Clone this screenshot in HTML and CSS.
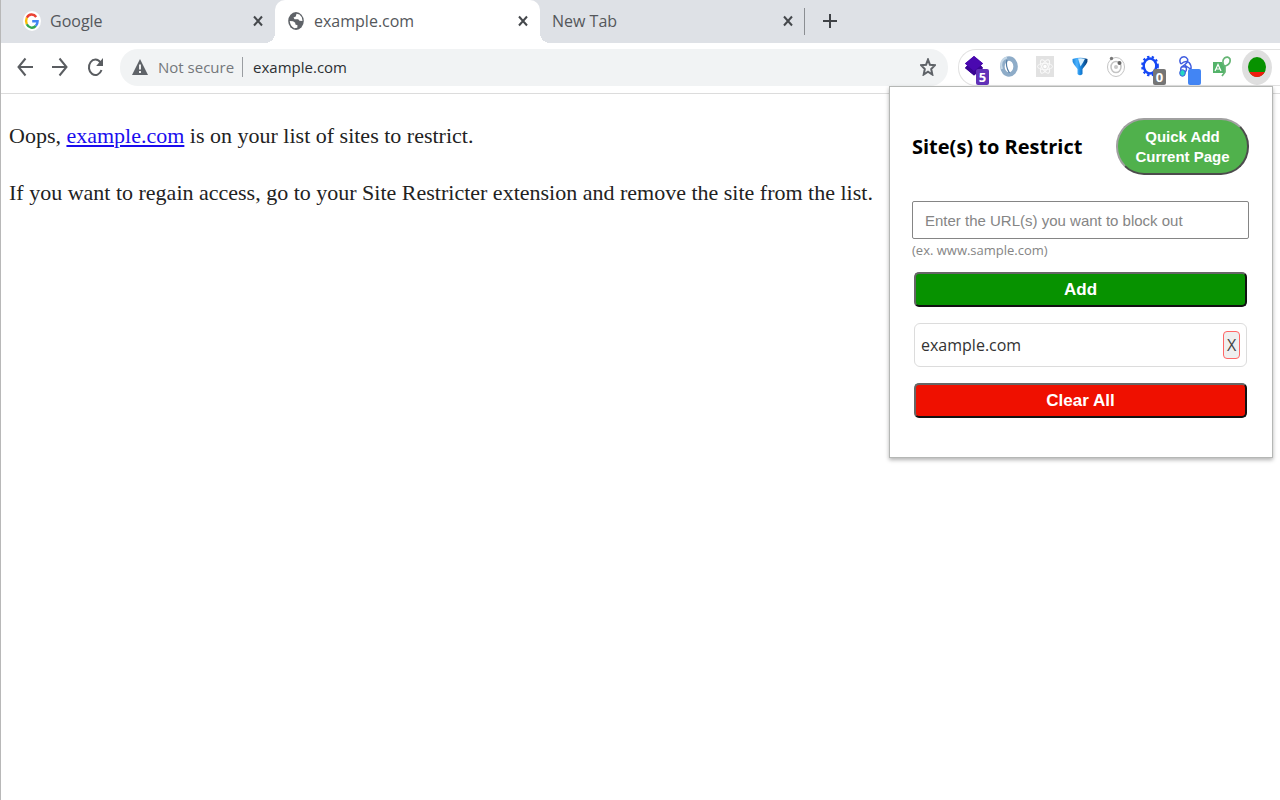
FILE: index.html
```html
<!DOCTYPE html>
<html lang="en">
<head>
<meta charset="utf-8">
<title>example.com</title>
<link rel="stylesheet" href="styles.css">
</head>
<body>
<div class="browser">
  <header class="chrome">
    <div class="tabs">
      <div class="tab tab-first">
        <svg class="favicon" viewBox="0 0 18 20" aria-hidden="true"><ellipse cx="9" cy="10" rx="9" ry="10" fill="#fff"/><g fill="none" stroke-width="2.400"><path d="M13.200 6A5.800 6.800 0 0 0 3.800 6.700" stroke="#ea4335"/><path d="M3.800 6.700A6 7 0 0 0 3.800 13.300" stroke="#fbbc05"/><path d="M3.800 13.300A5.800 6.800 0 0 0 12.800 14.900" stroke="#34a853"/><path d="M12.800 14.900Q14.600 13 14.600 10.200H9.200" stroke="#4285f4"/></g></svg>
        <span class="tab-title">Google</span>
        <button class="close" aria-label="Close Google"><svg viewBox="0 0 10 12"><path d="M1 1.500L9 10.500M9 1.500L1 10.500"/></svg></button>
      </div>
      <div class="tab tab-active">
        <svg class="favicon" viewBox="0 0 18 20" aria-hidden="true"><ellipse cx="9" cy="10" rx="7.800" ry="9" fill="#5f6368"/><path d="M9.500 2.800L12.500 3.500 14.800 6.200 15.500 10 12.500 9.800 11.200 8.300 7.500 8.200 6.500 6.500 8.800 5.500Z" fill="#fff"/><path d="M2.700 10L6 10.200 8.200 11.800 8.400 13.600 10.500 14.200 10.300 16.800 7.300 17.200Q3.500 15.500 2.700 10Z" fill="#fff"/></svg>
        <span class="tab-title">example.com</span>
        <button class="close" aria-label="Close example.com"><svg viewBox="0 0 10 12"><path d="M1 1.500L9 10.500M9 1.500L1 10.500"/></svg></button>
      </div>
      <div class="tab tab-last">
        <span class="tab-title">New Tab</span>
        <button class="close" aria-label="Close New Tab"><svg viewBox="0 0 10 12"><path d="M1 1.500L9 10.500M9 1.500L1 10.500"/></svg></button>
      </div>
      <button class="new-tab" aria-label="New tab"><svg viewBox="0 0 14 16"><path d="M7 1V15M0 8H14"/></svg></button>
    </div>
    <div class="toolbar">
      <nav class="nav">
        <button aria-label="Back"><svg viewBox="0 0 16 20"><path d="M16 10H1.500M8.500 1.500L1.500 10 8.500 18.500"/></svg></button>
        <button aria-label="Forward"><svg viewBox="0 0 16 20"><path d="M0 10H14.500M7.500 1.500L14.500 10 7.500 18.500"/></svg></button>
        <button aria-label="Reload"><svg viewBox="0 0 16 20"><path d="M13.500 5.500A6.500 7.700 0 1 0 14.500 13"/><path class="solid" d="M16 1V9H9.200Z"/></svg></button>
      </nav>
      <div class="address">
        <svg class="warning" viewBox="0 0 16 18" aria-hidden="true"><path d="M8 1L16 17H0Z" fill="#5f6368"/><path d="M8 6.500V11.500M8 13V15" stroke="#fff" stroke-width="1.800"/></svg>
        <span class="security">Not secure</span>
        <input class="url" type="text" aria-label="Address" value="example.com">
        <button class="star" aria-label="Bookmark this page"><svg viewBox="0 0 16 18"><path d="M8 1.500L9.900 6.700 15 7.200 11.200 11 12.300 16.500 8 13.600 3.700 16.500 4.800 11 1 7.200 6.100 6.700Z"/></svg></button>
      </div>
      <div class="extensions">
        <button class="ext" aria-label="Layers"><svg viewBox="0 0 20 24"><path d="M10 1L19 8.500 16.800 10.500 19 13 10 20.500 1 13 3.200 10.500 1 8.500Z" fill="#4007a2"/><path d="M3.200 10.500L1 13 10 20.500 19 13 16.800 10.500 10 16Z" fill="#3a0593"/><path d="M10 1L19 8.500 10 16 1 8.500Z" fill="#4a08b0"/></svg><span class="badge badge-purple">5</span></button>
        <button class="ext" aria-label="Ring"><svg viewBox="0 0 20 24"><ellipse cx="10" cy="11.500" rx="6.600" ry="8" fill="none" stroke="#8eacc8" stroke-width="4.500"/><path d="M3 14Q0 5 8 2.500" fill="none" stroke="#c4d7e6" stroke-width="2"/><path d="M8 5Q6 11 10.500 18" fill="none" stroke="#537da5" stroke-width="1.200"/></svg></button>
        <button class="ext" aria-label="React tools"><svg viewBox="0 0 20 24"><path d="M1 1H19V22H1Z" fill="#e2e2e2"/><g fill="none" stroke="#fafafa"><ellipse cx="10" cy="11.500" rx="7.500" ry="3.200"/><ellipse cx="10" cy="11.500" rx="7.500" ry="3.200" transform="rotate(60 10 11.500)"/><ellipse cx="10" cy="11.500" rx="7.500" ry="3.200" transform="rotate(120 10 11.500)"/></g><circle cx="10" cy="11.500" r="1.700" fill="#fff"/></svg></button>
        <button class="ext" aria-label="Pin"><svg viewBox="0 0 20 24"><defs><linearGradient id="pin" x2="1"><stop stop-color="#1b83d8"/><stop offset=".3" stop-color="#4db3ff"/><stop offset=".55" stop-color="#1683dd"/><stop offset="1" stop-color="#063a73"/></linearGradient></defs><path d="M2.500 4Q10 1.500 17.500 4 18 7 16 9.500L12.500 14V19Q10 21.500 7.500 19V14L4 9.500Q2 7 2.500 4Z" fill="url(#pin)"/><path d="M8 3.500Q11.500 2.800 15 3.800L13 7.500 10.500 11.500Z" fill="#d7f0ff"/></svg></button>
        <button class="ext" aria-label="Orbit"><svg viewBox="0 0 20 24"><g fill="none" stroke="#c4c4c4"><ellipse cx="10" cy="12" rx="8.500" ry="9.500"/><ellipse cx="10" cy="12" rx="5" ry="5.500" stroke-width="1.500"/></g><circle cx="10" cy="12" r="2" fill="#c8c8c8"/><circle cx="5.500" cy="3.500" r="1.700" fill="#777"/><circle cx="13.500" cy="8" r="2" fill="#666"/></svg></button>
        <button class="ext" aria-label="Gear"><svg viewBox="0 0 20 24"><ellipse cx="9" cy="11" rx="6.300" ry="7.500" fill="none" stroke="#1648f5" stroke-width="2.500"/><ellipse cx="9" cy="11" rx="7.800" ry="9.300" fill="none" stroke="#1648f5" stroke-width="2.200" stroke-dasharray="2.300 2.350"/></svg><span class="badge badge-gray">0</span></button>
        <button class="ext" aria-label="Hook"><svg viewBox="0 0 20 24"><g fill="none" stroke="#3f5ce0" stroke-width="1.500"><path d="M5 9Q2.500 5 5.500 2.500 9.500 .5 11.500 4 12.500 7 9 9.500L5.500 12Q4 14 5.500 17"/><path d="M5 9Q9.500 5 13 7.500 15.500 10 15 14M8.500 10L14.500 14M6 12Q10.500 11 10.500 14 10.500 16 8.500 18"/></g><ellipse cx="6.500" cy="18" rx="2.800" ry="3.300" fill="#26d8c3" stroke="#3f5ce0"/></svg><span class="badge badge-blue"></span></button>
        <button class="ext" aria-label="Font finder"><svg viewBox="0 0 20 24"><path d="M1 7H10L13 11V18H1Z" fill="#54b36a"/><g fill="none" stroke="#fff" stroke-width="1.200"><path d="M3 16L6 9.500 9 16M4 14H8"/></g><g fill="none" stroke="#65b574" stroke-width="1.700"><path d="M12 11Q9.500 6 12.500 3 16 .8 18 4 19 8.500 14.500 10.500L13 11V17L10 21"/></g></svg></button>
        <button class="ext ext-current" aria-label="Site Restricter"><svg viewBox="0 0 20 24"><ellipse cx="10" cy="12" rx="9" ry="10" fill="#079200"/><path d="M2.300 17H17.700Q15 22 10 22 5 22 2.300 17Z" fill="#f01b0d"/></svg></button>
      </div>
    </div>
  </header>
  <main class="page">
    <p>Oops, <a href="#">example.com</a> is on your list of sites to restrict.</p>
    <p>If you want to regain access, go to your Site Restricter extension and remove the site from the list.</p>
  </main>
  <section class="popup" aria-label="Site Restricter">
    <div class="popup-head">
      <h1>Site(s) to Restrict</h1>
      <button class="quick">Quick Add<br>Current Page</button>
    </div>
    <input class="site-input" id="site" type="text" placeholder="Enter the URL(s) you want to block out">
    <label class="hint" for="site">(ex. www.sample.com)</label>
    <div class="actions">
      <button class="action add">Add</button>
      <div class="site"><span>example.com</span><button class="remove" aria-label="Remove example.com">X</button></div>
      <button class="action clear">Clear All</button>
    </div>
  </section>
</div>
</body>
</html>
```
FILE: styles.css
```css
* { box-sizing: border-box; }
body { margin: 0; background: #fff; }
button { padding: 0; border: 0; background: none; font: inherit; color: inherit; }
svg { display: block; }

.browser {
  position: relative;
  min-height: 100vh;
  border-left: 1px solid #b8b8b8;
  font-family: "Open Sans", "Noto Sans", sans-serif;
}

/* Tab strip */
.tabs { display: flex; height: 43px; background: #dee1e6; color: #54575b; }
.tab { display: flex; align-items: center; width: 265px; padding: 0 12px 1px; font-size: 16px; }
.tab-first { width: 274px; padding-left: 22px; }
.tab-active { position: relative; background: #fff; border-radius: 10px 10px 0 0; }
.tab-active::before, .tab-active::after {
  content: ""; position: absolute; bottom: 0; width: 10px; height: 10px;
}
.tab-active::before { left: -10px; background: radial-gradient(circle at 0 0, #dee1e6 10px, #fff 10px); }
.tab-active::after { right: -10px; background: radial-gradient(circle at 100% 0, #dee1e6 10px, #fff 10px); }
.favicon { width: 18px; height: 20px; margin-right: 9px; }
.tab-title { flex: 1; }
.close svg { width: 10px; height: 12px; fill: none; stroke: #45484c; stroke-width: 2; }
.tab-last { position: relative; }
.tab-last::after { content: ""; position: absolute; right: 0; top: 8px; width: 1px; height: 27px; background: #8b8e92; }
.new-tab { padding: 0 18px 2px; }
.new-tab svg { width: 14px; height: 16px; fill: none; stroke: #3f4246; stroke-width: 2; }

/* Toolbar */
.toolbar { display: flex; align-items: center; height: 51px; padding-bottom: 2px; border-bottom: 1px solid #dcdcdc; }
.nav { display: flex; gap: 19px; padding: 0 17px 0 16px; }
.nav svg { width: 16px; height: 20px; fill: none; stroke: #5a5d61; stroke-width: 2; }
.nav .solid { fill: #5a5d61; stroke: none; }
.address {
  display: flex; flex: 1; align-items: center; min-width: 0; height: 37px;
  padding: 0 12px; border-radius: 18px; background: #f1f3f4; font-size: 15px;
}
.warning { width: 16px; height: 18px; margin-right: 10px; }
.security { padding-right: 8px; border-right: 1px solid #9a9da1; color: #74777b; line-height: 20px; white-space: nowrap; }
.url { flex: 1; min-width: 0; padding: 0 0 0 10px; border: 0; outline: 0; background: none; font: inherit; color: #2c2f33; }
.star svg { width: 16px; height: 18px; fill: none; stroke: #5f6368; stroke-width: 2; }
.extensions {
  display: flex; flex: none; align-items: center; justify-content: space-between;
  width: 322px; height: 37px; margin-left: 10px; padding-right: 8px;
  border: 1px solid #e2e2e2; border-right: 0; border-radius: 18px 0 0 18px;
}
.ext { display: grid; position: relative; width: 30px; height: 35px; place-items: center; }
.ext svg { width: 20px; height: 24px; }
.ext-current { border-radius: 50%; background: #dfdfdf; }
.badge {
  position: absolute; right: 0; bottom: 0; width: 13px; height: 16px; border-radius: 2px;
  color: #fff; font: bold 13px/16px "Open Sans", sans-serif;
}
.badge-purple { background: #6232b8; }
.badge-gray { background: #757575; }
.badge-blue { background: #4285f4; }

/* Page content */
.page { padding: 25px 8px; font: 22px/33px "Liberation Serif", serif; color: #222; }
.page p { margin: 0 0 24px; }
.page a { color: #1a0dee; }

/* Extension popup */
.popup {
  position: absolute; top: 86px; right: 7px; width: 384px; padding: 31px 23px 39px 22px;
  border: 1px solid #b5b7b5; background: #fff; box-shadow: 0 2px 4px rgba(0, 0, 0, .3);
}
.popup-head { display: flex; align-items: center; justify-content: space-between; margin-bottom: 26px; }
.popup h1 { margin: 0; font-size: 20px; font-weight: 700; color: #000; }
.quick {
  width: 133px; height: 57px; border: 2px outset #a0a0a0; border-radius: 28px;
  background: #50b14c; color: #fff; font: bold 15px/20px "Liberation Sans", sans-serif;
}
.site-input {
  display: block; width: 100%; height: 38px; padding: 0 12px; border: 1px solid #858585; border-radius: 2px;
  font: 15px "Liberation Sans", sans-serif;
}
.site-input::placeholder { color: #858585; opacity: 1; }
.hint { display: block; font-size: 13px; line-height: 22px; color: #858585; }
.actions { display: grid; gap: 16px; padding: 11px 2px 0; }
.action {
  height: 35px; padding-top: 1px; border: 2px outset #666; border-radius: 5px;
  color: #fff; font: bold 17px "Liberation Sans", sans-serif;
}
.add { background: #079200; }
.clear { background: #ef1000; }
.site {
  display: flex; align-items: center; justify-content: space-between; height: 44px; padding: 0 6px;
  border: 1px solid #dcdcdc; border-radius: 6px; color: #333; font-size: 16px;
}
.remove { width: 17px; height: 28px; border: 1px solid #f66; border-radius: 4px; background: #efefef; color: #444; font-size: 16px; }
```
